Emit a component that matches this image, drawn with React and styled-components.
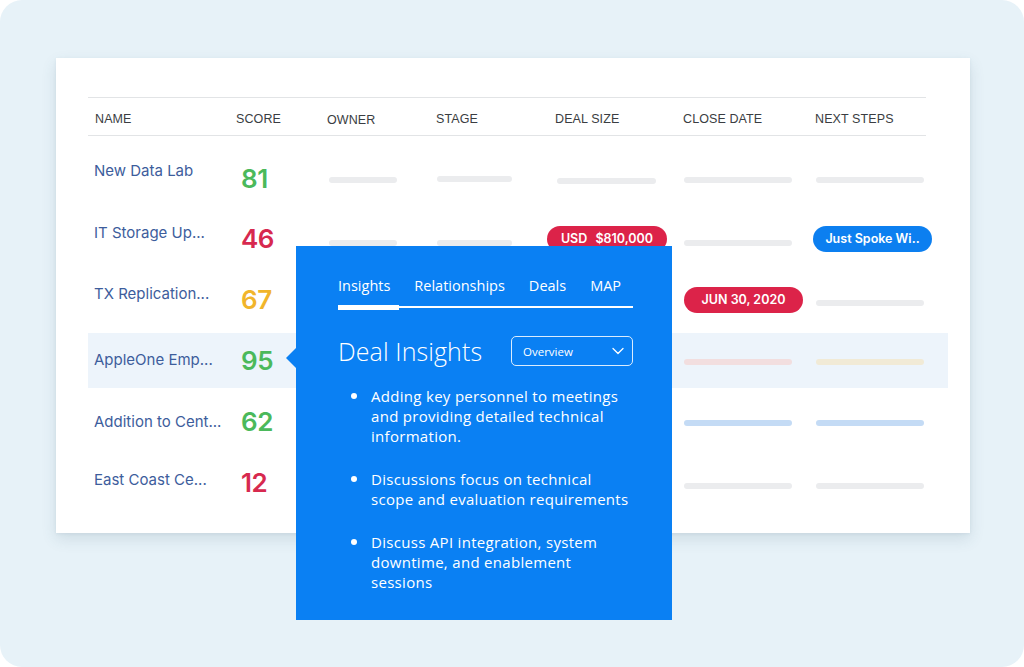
import React from 'react';
import styled, { createGlobalStyle } from 'styled-components';

const GlobalStyle = createGlobalStyle`
  html, body {
    margin: 0;
    padding: 0;
    background: #ffffff;
  }
  body {
    font-family: Inter, "Open Sans", sans-serif;
  }
`;

const Stage = styled.div`
  width: 1024px;
  height: 667px;
  box-sizing: border-box;
  background: #e7f2f8;
  border-radius: 22px;
  padding: 58px 0 0 56px;
  overflow: hidden;
`;

const Card = styled.div`
  position: relative;
  width: 914px;
  height: 475px;
  box-sizing: border-box;
  background: #ffffff;
  padding: 39px 0 0 32px;
  box-shadow: 0 6px 14px rgba(60, 90, 110, 0.14), 0 1px 3px rgba(60, 90, 110, 0.08);
`;

const COLS = '148px 91px 109px 119px 128px 132px 133px';

const Header = styled.div`
  display: grid;
  grid-template-columns: ${COLS};
  width: 838px;
  height: 37px;
  align-items: center;
  border-top: 1px solid #e2e4e6;
  border-bottom: 1px solid #e2e4e6;
  font-family: "Liberation Sans", Arial, sans-serif;
  font-size: 12.5px;
  color: #3a3d42;
  letter-spacing: 0.1px;
`;

const HeadCell = styled.div`
  padding-left: ${(p) => p.$pad || 0}px;
  padding-top: ${(p) => p.$down || 4}px;
`;

const Rows = styled.div`
  display: flex;
  flex-direction: column;
  gap: 6px;
  margin-top: 14px;
`;

const Row = styled.div`
  display: grid;
  grid-template-columns: ${COLS};
  width: 860px;
  height: 55px;
  align-items: center;
  background: ${(p) => (p.$active ? '#edf4fb' : 'transparent')};
`;

const Name = styled.div`
  padding-left: 6px;
  font-size: 15px;
  color: #3d5d9c;
  white-space: nowrap;
  margin-top: ${(p) => p.$lift || 0}px;
`;

const Score = styled.div`
  padding-left: 5px;
  font-size: 26px;
  font-weight: 600;
  letter-spacing: -0.5px;
  color: ${(p) => p.$color};
  margin-top: ${(p) => p.$drop || 0}px;
`;

const Cell = styled.div`
  display: flex;
  align-items: center;
  padding-left: ${(p) => p.$pad || 0}px;
  margin-top: ${(p) => p.$drop || 0}px;
`;

const Bar = styled.div`
  width: ${(p) => p.$w}px;
  height: 6px;
  border-radius: 3px;
  background: ${(p) => p.$tone || '#ebecee'};
`;

const Pill = styled.div`
  display: inline-flex;
  align-items: center;
  justify-content: center;
  height: 26px;
  width: ${(p) => p.$w}px;
  border-radius: 13px;
  background: ${(p) => (p.$blue ? '#0c7ff0' : '#dc2349')};
  color: #ffffff;
  font-size: 12.5px;
  font-weight: 600;
  white-space: nowrap;
  word-spacing: ${(p) => p.$spread || 0}px;
`;

const Popover = styled.div`
  position: absolute;
  left: 240px;
  top: 188px;
  width: 376px;
  height: 374px;
  box-sizing: border-box;
  background: #0a80f3;
  padding: 30px 38px 0 42px;
  color: #ffffff;
  font-family: "Open Sans", Inter, sans-serif;
  z-index: 2;

  &::before {
    content: '';
    position: absolute;
    left: -10px;
    top: 102px;
    border-top: 10px solid transparent;
    border-bottom: 10px solid transparent;
    border-right: 10px solid #0a80f3;
  }
`;

const Tabs = styled.div`
  display: flex;
  gap: 24px;
  width: 295px;
  font-size: 14.5px;
  padding-bottom: 11px;
  border-bottom: 2px solid #ffffff;
  position: relative;
`;

const Tab = styled.div`
  position: relative;
  white-space: nowrap;

  &::after {
    content: '';
    display: ${(p) => (p.$active ? 'block' : 'none')};
    position: absolute;
    left: 0;
    right: -9px;
    bottom: -15px;
    height: 5px;
    background: #ffffff;
  }
`;

const TitleRow = styled.div`
  display: flex;
  align-items: center;
  justify-content: space-between;
  width: 295px;
  margin-top: 26px;
`;

const Title = styled.h2`
  margin: 0;
  font-size: 25px;
  font-weight: 300;
  letter-spacing: 0.1px;
`;

const Select = styled.div`
  display: flex;
  align-items: center;
  justify-content: space-between;
  width: 122px;
  height: 30px;
  box-sizing: border-box;
  border: 1px solid rgba(255, 255, 255, 0.85);
  border-radius: 5px;
  padding: 0 8px 0 11px;
  font-size: 11.5px;
`;

const List = styled.ul`
  list-style: none;
  margin: 18px 0 0;
  padding: 0;
  display: flex;
  flex-direction: column;
  gap: 23px;
`;

const Item = styled.li`
  position: relative;
  padding-left: 33px;
  font-size: 15px;
  line-height: 20px;
  letter-spacing: 0.3px;
  white-space: nowrap;

  &::before {
    content: '';
    position: absolute;
    left: 13px;
    top: 7px;
    width: 6px;
    height: 6px;
    border-radius: 50%;
    background: #ffffff;
  }
`;

const GREEN = '#4bb95b';
const RED = '#d7294f';
const YELLOW = '#f1b52b';

// lift/drop margins are halved by the row's centred alignment
const deals = [
  { name: 'New Data Lab', score: 81, color: GREEN, lift: -14 },
  { name: 'IT Storage Up...', score: 46, color: RED, lift: -12 },
  { name: 'TX Replication...', score: 67, color: YELLOW, lift: -12 },
  { name: 'AppleOne Emp...', score: 95, color: GREEN, lift: -3, active: true },
  { name: 'Addition to Cent...', score: 62, color: GREEN },
  { name: 'East Coast Ce...', score: 12, color: RED, lift: -6 },
];

const Chevron = () => (
  <svg width="12" height="8" viewBox="0 0 12 8" fill="none">
    <path d="M1 1.5l5 5 5-5" stroke="#ffffff" strokeWidth="1.3" strokeLinecap="round" strokeLinejoin="round" />
  </svg>
);

const Placeholders = ({ index }) => {
  if (index === 0) {
    return (
      <>
        <Cell $pad={2} $drop={4}><Bar $w={68} /></Cell>
        <Cell $pad={1} $drop={3}><Bar $w={75} /></Cell>
        <Cell $pad={2} $drop={6}><Bar $w={99} /></Cell>
        <Cell $pad={1} $drop={4}><Bar $w={108} /></Cell>
        <Cell $pad={1} $drop={4}><Bar $w={108} /></Cell>
      </>
    );
  }
  if (index === 1) {
    return (
      <>
        <Cell $pad={2} $drop={8}><Bar $w={68} /></Cell>
        <Cell $pad={1} $drop={8}><Bar $w={75} /></Cell>
        <Cell $pad={0} style={{ marginLeft: -8 }}>
          <Pill $w={120} $spread={5}>USD $810,000</Pill>
        </Cell>
        <Cell $pad={1} $drop={8}><Bar $w={108} /></Cell>
        <Cell $pad={0} style={{ marginLeft: -2 }}>
          <Pill $w={119} $blue>Just Spoke Wi..</Pill>
        </Cell>
      </>
    );
  }
  if (index === 2) {
    return (
      <>
        <Cell />
        <Cell />
        <Cell />
        <Cell $pad={1}><Pill $w={119}>JUN 30, 2020</Pill></Cell>
        <Cell $pad={1} $drop={6}><Bar $w={108} /></Cell>
      </>
    );
  }
  if (index === 3) {
    return (
      <>
        <Cell />
        <Cell />
        <Cell />
        <Cell $pad={1} $drop={2}><Bar $w={108} $tone="#f2dedf" /></Cell>
        <Cell $pad={1} $drop={2}><Bar $w={108} $tone="#f1ead6" /></Cell>
      </>
    );
  }
  if (index === 4) {
    return (
      <>
        <Cell />
        <Cell />
        <Cell />
        <Cell $pad={1} $drop={2}><Bar $w={108} $tone="#c4dbf5" /></Cell>
        <Cell $pad={1} $drop={2}><Bar $w={108} $tone="#c4dbf5" /></Cell>
      </>
    );
  }
  return (
    <>
      <Cell />
      <Cell />
      <Cell />
      <Cell $pad={1} $drop={6}><Bar $w={108} /></Cell>
      <Cell $pad={1} $drop={6}><Bar $w={108} /></Cell>
    </>
  );
};

const App = () => {
  return (
    <>
      <GlobalStyle />
      <Stage>
        <Card>
          <Header>
            <HeadCell $pad={7}>NAME</HeadCell>
            <HeadCell>SCORE</HeadCell>
            <HeadCell $down={6}>OWNER</HeadCell>
            <HeadCell>STAGE</HeadCell>
            <HeadCell>DEAL SIZE</HeadCell>
            <HeadCell>CLOSE DATE</HeadCell>
            <HeadCell>NEXT STEPS</HeadCell>
          </Header>
          <Rows>
            {deals.map((d, i) => (
              <Row key={d.name} $active={d.active}>
                <Name $lift={d.lift}>{d.name}</Name>
                <Score $color={d.color} $drop={i === 0 ? 1 : 0}>{d.score}</Score>
                <Placeholders index={i} />
              </Row>
            ))}
          </Rows>

          <Popover>
            <Tabs>
              <Tab $active>Insights</Tab>
              <Tab>Relationships</Tab>
              <Tab>Deals</Tab>
              <Tab>MAP</Tab>
            </Tabs>
            <TitleRow>
              <Title>Deal Insights</Title>
              <Select>
                <span>Overview</span>
                <Chevron />
              </Select>
            </TitleRow>
            <List>
              <Item>
                Adding key personnel to meetings<br />
                and providing detailed technical<br />
                information.
              </Item>
              <Item>
                Discussions focus on technical<br />
                scope and evaluation requirements
              </Item>
              <Item>
                Discuss API integration, system<br />
                downtime, and enablement<br />
                sessions
              </Item>
            </List>
          </Popover>
        </Card>
      </Stage>
    </>
  );
};

export default App;
